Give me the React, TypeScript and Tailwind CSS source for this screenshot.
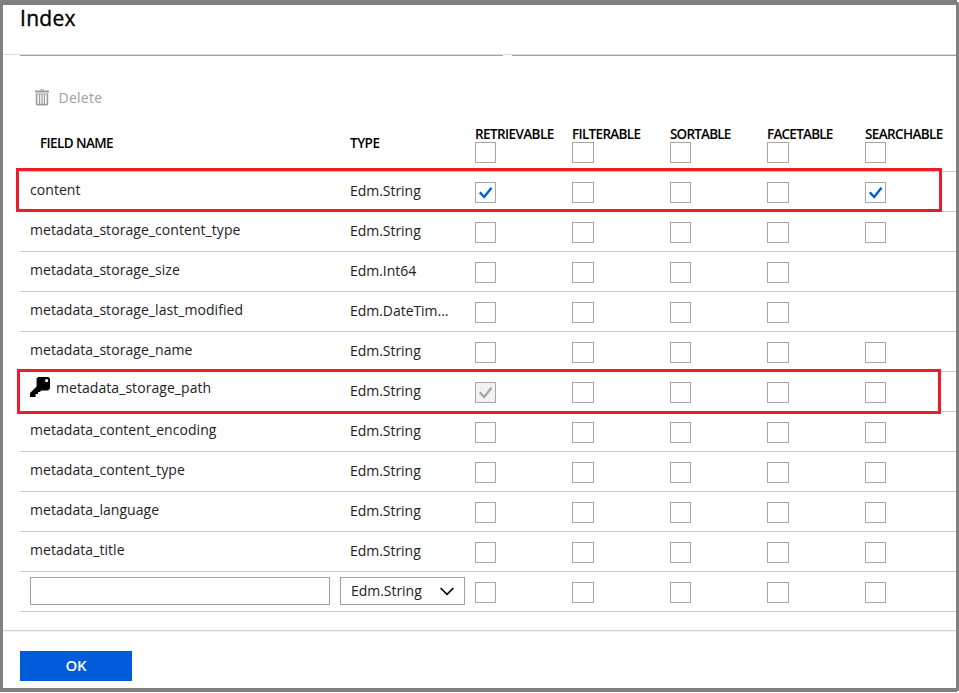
import React from 'react';

type CheckState = 'off' | 'on' | 'locked' | 'none';

type Field = {
  name: string;
  type: string;
  isKey?: boolean;
  checks: CheckState[];
};

const COLUMNS = [
  { label: 'RETRIEVABLE', width: 'w-[97px]', tracking: 'tracking-[-0.6px]', box: 'w-[21px]' },
  { label: 'FILTERABLE', width: 'w-[98px]', tracking: 'tracking-[-0.68px]', box: 'w-[22px]' },
  { label: 'SORTABLE', width: 'w-[97px]', tracking: 'tracking-[-0.8px]', box: 'w-[21px]' },
  { label: 'FACETABLE', width: 'w-[98px]', tracking: 'tracking-[-0.77px]', box: 'w-[22px]' },
  { label: 'SEARCHABLE', width: 'w-[91px]', tracking: 'tracking-[-0.62px]', box: 'w-[21px]' },
];

const ALL_OFF: CheckState[] = ['off', 'off', 'off', 'off', 'off'];
const NOT_SEARCHABLE: CheckState[] = ['off', 'off', 'off', 'off', 'none'];

const FIELDS: Field[] = [
  { name: 'content', type: 'Edm.String', checks: ['on', 'off', 'off', 'off', 'on'] },
  { name: 'metadata_storage_content_type', type: 'Edm.String', checks: ALL_OFF },
  { name: 'metadata_storage_size', type: 'Edm.Int64', checks: NOT_SEARCHABLE },
  { name: 'metadata_storage_last_modified', type: 'Edm.DateTim...', checks: NOT_SEARCHABLE },
  { name: 'metadata_storage_name', type: 'Edm.String', checks: ALL_OFF },
  { name: 'metadata_storage_path', type: 'Edm.String', isKey: true, checks: ['locked', 'off', 'off', 'off', 'off'] },
  { name: 'metadata_content_encoding', type: 'Edm.String', checks: ALL_OFF },
  { name: 'metadata_content_type', type: 'Edm.String', checks: ALL_OFF },
  { name: 'metadata_language', type: 'Edm.String', checks: ALL_OFF },
  { name: 'metadata_title', type: 'Edm.String', checks: ALL_OFF },
];

function TrashIcon() {
  return (
    <svg width="14" height="17" viewBox="0 0 14 17" fill="none">
      <path d="M5 .7h4" stroke="#c4c4c4" strokeWidth="1.4" />
      <path d="M0 2.5h14" stroke="#999" strokeWidth="2" />
      <path d="M1.6 4.4v10.4q0 .8.8.8h9.2q.8 0 .8-.8V4.4" stroke="#999" strokeWidth="1.6" />
      <path d="M1 5h12" stroke="#aaa" strokeWidth="1" />
      <path d="M4.6 5v10M7 5v10M9.4 5v10" stroke="#999" strokeWidth="1.2" />
    </svg>
  );
}

function KeyIcon() {
  return (
    <svg width="20" height="20" viewBox="0 0 20 20" className="shrink-0">
      <path
        fillRule="evenodd"
        d="M8.2 0H18.4L20 1.6V11.6L18.2 13.4H11.4L9.8 15H8V17H5.6V20H0V16L6.6 9.6V1.6zM16.6 2a1.6 1.6 0 1 0 0 3.2a1.6 1.6 0 1 0 0-3.2z"
        fill="#000"
      />
    </svg>
  );
}

function CheckBox({ state, size }: { state: CheckState; size: string }) {
  if (state === 'none') return null;
  return (
    <div className={`${size} h-[21px] border border-[#a6a6a6] ${state === 'locked' ? 'bg-[#f2f2f2]' : 'bg-white'}`}>
      {state !== 'off' && (
        <svg width="19" height="19" viewBox="0 0 19 19" fill="none">
          <path
            d="M3.8 9.4l4.4 4.6 7.3-9.2"
            stroke={state === 'on' ? '#015cda' : '#a6a6a6'}
            strokeWidth="2.4"
          />
        </svg>
      )}
    </div>
  );
}

function CheckCells({ checks }: { checks: CheckState[] }) {
  return (
    <div className="flex pt-2.5">
      {COLUMNS.map((column, i) => (
        <div key={column.label} className={column.width}>
          <CheckBox state={checks[i]} size={column.box} />
        </div>
      ))}
    </div>
  );
}

function FieldRow({ field }: { field: Field }) {
  return (
    <div className="flex h-10 border-t border-[#cacaca]">
      {field.isKey ? (
        <div className="flex w-80 items-start gap-1.5 pt-[5px] pl-2.5">
          <KeyIcon />
          <span className="pt-px tracking-[0.06px]">{field.name}</span>
        </div>
      ) : (
        <div className="w-80 pt-2 pl-2.5 tracking-[0.06px]">{field.name}</div>
      )}
      <div className="w-[135px] pt-[9px] pl-2.5 tracking-[-0.04px]">{field.type}</div>
      <CheckCells checks={field.checks} />
    </div>
  );
}

export default function App() {
  return (
    <div className="h-[693px] w-[959px] bg-white font-['Open_Sans','Noto_Sans',sans-serif] text-sm text-[#222]">
      <div className="relative h-[692px] border-x-[3px] border-t-[5px] border-b-4 border-[#808080]">
        <header className="h-[50px] border-b border-[#dcdcdc] pt-px pl-[17px]">
          <h1 className="text-[21px] leading-6 font-medium tracking-[0.3px] text-black [-webkit-text-stroke:0.35px_black]">
            Index
          </h1>
        </header>

        <main className="h-[575px] pl-[17px]">
          <div className="flex gap-[9px]">
            <div className="h-px w-[483px] bg-[#a0a0a0]" />
            <div className="h-px flex-1 bg-[#a0a0a0]" />
          </div>

          <div className="mt-8 flex h-5 items-start gap-2.5 pl-[15px]">
            <div className="pt-px">
              <TrashIcon />
            </div>
            <span className="-ml-[0.5px] tracking-[0.25px] text-[#a0a0a0]">Delete</span>
          </div>

          <div className="mt-[18px] flex h-[45px] text-[13.5px] leading-[17px] font-semibold text-black">
            <div className="w-80 pt-[9px] pl-5 tracking-[-0.6px]">FIELD NAME</div>
            <div className="w-[135px] pt-[9px] pl-2.5 tracking-[-0.5px]">TYPE</div>
            {COLUMNS.map((column) => (
              <div key={column.label} className={column.width}>
                <div className={`${column.tracking} -mb-px`}>{column.label}</div>
                <CheckBox state="off" size={column.box} />
              </div>
            ))}
          </div>

          {FIELDS.map((field) => (
            <FieldRow key={field.name} field={field} />
          ))}

          <div className="flex h-[41px] border-y border-[#cacaca]">
            <div className="flex w-[455px] gap-2.5 pt-[5px] pl-2.5">
              <input className="h-7 w-[300px] border border-[#a0a0a0] bg-white px-2 outline-none" />
              <div className="flex h-7 w-[125px] items-center justify-between border border-[#a0a0a0] pr-2.5 pl-2.5 leading-[26px]">
                <span className="tracking-[-0.04px]">Edm.String</span>
                <svg width="14" height="9" viewBox="0 0 14 9" fill="none" className="mt-px">
                  <path d="M.6 1l6.4 6.4L13.4 1" stroke="#000" strokeWidth="1.6" />
                </svg>
              </div>
            </div>
            <CheckCells checks={ALL_OFF} />
          </div>
        </main>

        <footer className="border-t border-[#d2d2d2] pl-[17px]">
          <div className="-ml-[17px] h-px bg-[#f4f4f4]" />
          <button className="mt-[19px] h-[30px] w-28 bg-[#015cda] pb-0.5 text-[15px] leading-7 font-semibold tracking-[-0.3px] text-white">
            OK
          </button>
        </footer>

        <span className="absolute -top-[5px] -right-[3px] h-0.5 w-0.5 bg-white" />
        <span className="absolute -right-[3px] -bottom-1 h-px w-0.5 bg-white" />
        <div className="absolute top-[163px] left-[13px] h-11 w-[926px] border-[3px] border-[#ee1c25]" />
        <div className="absolute top-[364px] left-[14px] h-[45px] w-[924px] border-[3px] border-[#ee1c25]" />
      </div>
    </div>
  );
}
